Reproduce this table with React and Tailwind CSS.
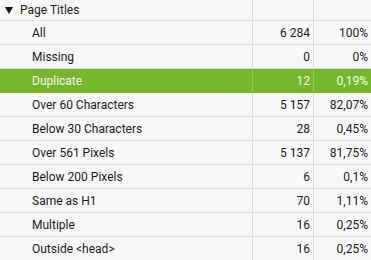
import React from "react";

const rows = [
  ["All", "6 284", "100%"],
  ["Missing", "0", "0%"],
  ["Duplicate", "12", "0,19%", true],
  ["Over 60 Characters", "5 157", "82,07%"],
  ["Below 30 Characters", "28", "0,45%"],
  ["Over 561 Pixels", "5 137", "81,75%"],
  ["Below 200 Pixels", "6", "0,1%"],
  ["Same as H1", "70", "1,11%"],
  ["Multiple", "16", "0,25%"],
  ["Outside <head>", "16", "0,25%"],
];

export default function App() {
  return (
    <div className="w-[371px] h-[260px] overflow-hidden bg-[#f8f8f8] text-[12px] text-[#1a1a1a]" style={{ fontFamily: "Roboto, 'Liberation Sans', sans-serif" }}>
      <div className="flex h-[21px] border-b border-[#dcdcdc]">
        <div className="w-[253px] border-r border-[#dcdcdc] flex items-center pl-[5px] leading-none">
          <svg width="8" height="7" viewBox="0 0 8 7" className="mr-[7px]">
            <path d="M0 0 L8 0 L4 7 Z" fill="#111" />
          </svg>
          <span>Page Titles</span>
        </div>
        <div className="w-[61px] border-r border-[#dcdcdc]" />
        <div className="flex-1" />
      </div>
      {rows.map(([name, count, pct, sel]) => (
        <div
          key={name}
          className={`flex h-[24px] border-b ${sel ? "bg-[#74b72c] text-[#f4fbe9] border-[#74b72c]" : "border-[#dcdcdc]"}`}
        >
          <div className={`w-[253px] border-r flex items-center pl-[32px] ${sel ? "border-[#8fc656]" : "border-[#dcdcdc]"}`}>{name}</div>
          <div className={`w-[61px] border-r flex items-center justify-end pr-[3px] ${sel ? "border-[#8fc656]" : "border-[#dcdcdc]"}`}>{count}</div>
          <div className="flex-1 flex items-center justify-end pr-[3px]">{pct}</div>
        </div>
      ))}
    </div>
  );
}
